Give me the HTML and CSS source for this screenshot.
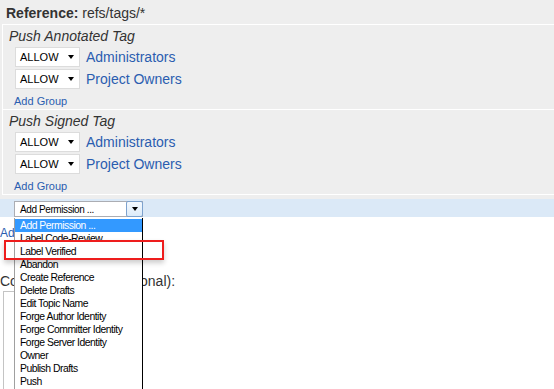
FILE: index.html
```html
<!DOCTYPE html>
<html lang="en">
<head>
  <meta charset="UTF-8" />
  <title>Project Access</title>
  <link rel="stylesheet" href="styles.css">
</head>
<body>
  <div class="access">
    <div class="refname"><b>Reference:</b> refs/tags/*</div>
    <div class="perms">
      <div class="perm">
        <div class="perm-name">Push Annotated Tag</div>
        <div class="rule">
          <div class="action">ALLOW<span class="caret"></span></div>
          <a href="#" class="group">Administrators</a>
        </div>
        <div class="rule">
          <div class="action">ALLOW<span class="caret"></span></div>
          <a href="#" class="group">Project Owners</a>
        </div>
        <a href="#" class="add-group">Add Group</a>
      </div>
      <div class="perm">
        <div class="perm-name">Push Signed Tag</div>
        <div class="rule">
          <div class="action">ALLOW<span class="caret"></span></div>
          <a href="#" class="group">Administrators</a>
        </div>
        <div class="rule">
          <div class="action">ALLOW<span class="caret"></span></div>
          <a href="#" class="group">Project Owners</a>
        </div>
        <a href="#" class="add-group">Add Group</a>
      </div>
    </div>
  </div>
  <div class="add-perm">
    <div class="perm-select">
      <span>Add Permission ...</span>
      <span class="perm-btn"><span class="caret"></span></span>
    </div>
  </div>
  <a href="#" class="add-ref">Add Reference</a>
  <div class="commit-label">Commit Message (optional):</div>
  <textarea class="commit-msg"></textarea>

  <ul class="perm-list">
    <li class="selected">Add Permission ...</li>
    <li>Label Code-Review</li>
    <li>Label Verified</li>
    <li>Abandon</li>
    <li>Create Reference</li>
    <li>Delete Drafts</li>
    <li>Edit Topic Name</li>
    <li>Forge Author Identity</li>
    <li>Forge Committer Identity</li>
    <li>Forge Server Identity</li>
    <li>Owner</li>
    <li>Publish Drafts</li>
    <li>Push</li>
  </ul>
  <div class="callout"></div>
</body>
</html>
```

FILE: styles.css
```css
body {
  margin: 0;
  font-family: "Liberation Sans", Arial, sans-serif;
  color: #333;
  background: #fff;
  overflow: hidden;
}
a {
  color: #2a5db0;
  text-decoration: none;
}
.access {
  background: #eee;
  padding-bottom: 4px;
}
.refname {
  font-size: 14px;
  line-height: 18px;
  padding: 4px 6px 2px;
}
.perms {
  margin-left: 2px;
  border-left: 1px solid #fff;
  border-bottom: 1px solid #fff;
}
.perm {
  border-top: 1px solid #fff;
  padding: 2px 0 2px 6px;
}
.perm-name {
  font-style: italic;
  font-size: 14px;
  line-height: 18px;
}
.rule {
  display: flex;
  align-items: center;
  gap: 6px;
  margin: 2px 0 0 6px;
}
.action {
  width: 65px;
  height: 20px;
  box-sizing: border-box;
  border: 1px solid #dcdcdc;
  background: #fff;
  display: flex;
  align-items: center;
  justify-content: space-between;
  padding: 0 5px 0 4px;
  font-size: 11px;
  color: #000;
}
.caret {
  width: 0;
  height: 0;
  border-style: solid;
  border-width: 4px 3.5px 0;
  border-color: #000 transparent transparent;
}
.group {
  font-size: 14px;
  line-height: 18px;
}
.add-group {
  display: block;
  margin: 6px 0 0 5px;
  font-size: 11px;
  line-height: 12px;
}
.add-perm {
  background: #dbe9f7;
  padding: 2px 0 0 14px;
  height: 16px;
}
.perm-select {
  width: 129px;
  height: 16px;
  box-sizing: border-box;
  border: 1px solid #abadb3;
  background: #fff;
  display: flex;
  align-items: center;
  justify-content: space-between;
  padding-left: 5px;
  font-size: 10px;
  letter-spacing: -0.4px;
  color: #000;
}
.perm-btn {
  width: 17px;
  height: 16px;
  box-sizing: border-box;
  border: 1px solid #7da2ce;
  border-radius: 2px;
  background: linear-gradient(#f4f9fe, #dcebf9);
  display: flex;
  align-items: center;
  justify-content: center;
  margin: -1px -1px 0 0;
}
.add-ref {
  display: block;
  margin-top: 9px;
  font-size: 12px;
  line-height: 14px;
}
.commit-label {
  margin-top: 32px;
  font-size: 14px;
  line-height: 18px;
}
.commit-msg {
  display: block;
  margin: 1px 0 0 3px;
  width: 120px;
  height: 110px;
  border: 1px solid #c4c4c4;
  resize: none;
}

/* open dropdown of the Add Permission select */
.perm-list {
  position: absolute;
  top: 218px;
  left: 14px;
  bottom: 0;
  width: 129px;
  box-sizing: border-box;
  margin: 0;
  padding: 1px 0 0;
  list-style: none;
  background: #fff;
  border-left: 1px solid #a0a0a0;
  border-right: 1px solid #000;
  overflow: hidden;
  font-size: 10.4px;
  letter-spacing: -0.5px;
  color: #000;
}
.perm-list li {
  line-height: 13px;
  padding-left: 5px;
  white-space: nowrap;
}
.perm-list .selected {
  background: #3399ff;
  color: #fff;
}

/* red highlight drawn over the screenshot */
.callout {
  position: absolute;
  left: 4px;
  top: 240px;
  width: 160px;
  height: 20px;
  box-sizing: border-box;
  border: 2px solid #ee1d1d;
  box-shadow: 0 3px 5px rgba(0, 0, 0, 0.2);
}
```
